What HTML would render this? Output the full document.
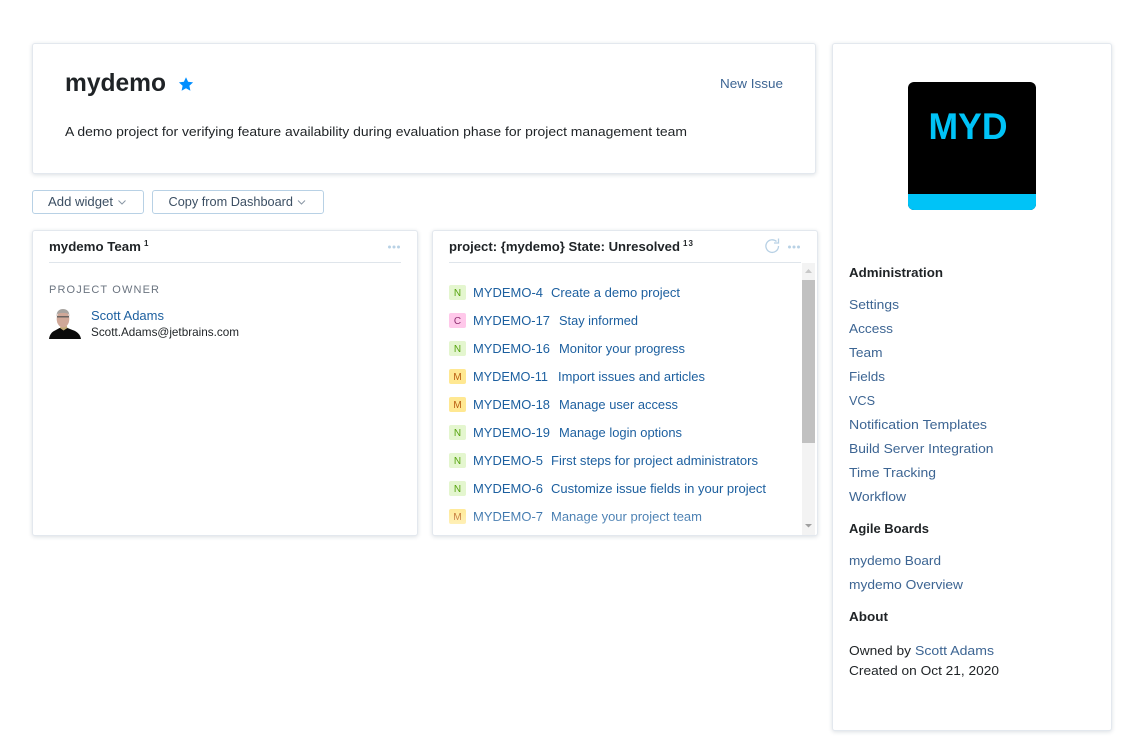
<!DOCTYPE html>
<html lang="en"><head><meta charset="utf-8"><title>mydemo</title>
<style>
html,body{margin:0;padding:0;background:#fff;width:1143px;height:748px;overflow:hidden}
.card{position:absolute;box-sizing:border-box;background:#fff;border:1px solid #e3e8ee;border-radius:3px;box-shadow:0 1px 4px rgba(40,60,90,.16)}
.btn{position:absolute;box-sizing:border-box;height:24px;top:190px;background:#fff;border:1px solid #b8d1e5;border-radius:3px}
.track{position:absolute;left:802px;top:263px;width:13px;height:272px;background:#f3f3f3}
.thumb{position:absolute;left:802px;top:280px;width:13px;height:163px;background:#c1c1c1}
.fade{position:absolute;left:434px;top:505px;width:368px;height:30px;background:linear-gradient(rgba(255,255,255,0),rgba(255,255,255,.55))}
.logo{position:absolute;left:908px;top:82px;width:128px;height:128px;background:#000;border-radius:6px;overflow:hidden}
.logo i{position:absolute;left:0;bottom:0;width:128px;height:16px;background:#00c3f7}
svg{position:absolute;left:0;top:0}
text{font-family:"Liberation Sans",sans-serif;font-size:13px;fill:#1f2326;white-space:pre}
.b{font-weight:700}
.l{fill:#3d6593}
.i{fill:#1c5f9f}
.tag{font-size:10px;text-anchor:middle}
</style></head><body>
<div class="card" style="left:32px;top:43px;width:784px;height:131px"></div>
<div class="card" style="left:832px;top:43px;width:280px;height:688px"></div>
<div class="card" style="left:32px;top:230px;width:386px;height:306px"></div>
<div class="card" style="left:432px;top:230px;width:386px;height:306px"></div>
<div class="btn" style="left:32px;width:112px"></div>
<div class="btn" style="left:152px;width:172px"></div>
<div class="track"></div><div class="thumb"></div>
<div class="logo"><i></i></div>
<svg width="1143" height="748" viewBox="0 0 1143 748">
<!-- header -->
<text class="b" x="65" y="91" style="font-size:25px" lengthAdjust="spacingAndGlyphs" textLength="101">mydemo</text>
<path d="M186 77.200l2.100 4.600 5 .6-3.700 3.400 1 4.900-4.400-2.500-4.400 2.500 1-4.900-3.700-3.400 5-.6z" fill="#008eff"/>
<text class="l" x="720" y="88" lengthAdjust="spacingAndGlyphs" textLength="63">New Issue</text>
<text x="65" y="136" lengthAdjust="spacingAndGlyphs" textLength="622">A demo project for verifying feature availability during evaluation phase for project management team</text>
<!-- buttons -->
<text style="fill:#3c4f63" x="48" y="206" lengthAdjust="spacingAndGlyphs" textLength="65">Add widget</text>
<path d="M118.500 200.500l3.500 3.500 3.500-3.500" fill="none" stroke="#8a97a5"/>
<text style="fill:#3c4f63" x="168.500" y="206" lengthAdjust="spacingAndGlyphs" textLength="124.500">Copy from Dashboard</text>
<path d="M298 200.500l3.500 3.500 3.500-3.500" fill="none" stroke="#8a97a5"/>
<!-- team widget -->
<text class="b" x="49" y="251" lengthAdjust="spacingAndGlyphs" textLength="92">mydemo Team</text>
<text class="b" x="144" y="246" style="font-size:8px" textLength="4">1</text>
<g fill="#b8d1e5"><circle cx="389.500" cy="247" r="1.500"/><circle cx="394" cy="247" r="1.500"/><circle cx="398.500" cy="247" r="1.500"/></g>
<rect x="49" y="262" width="352" height="1" fill="#dfe5eb"/>
<text x="49" y="293" style="font-size:11px;fill:#6b7480" textLength="110">PROJECT OWNER</text>
<!-- avatar -->
<path d="M49 339c.5-4 2.500-7 6-8.500l4.500-2.500h8l5 2c5 1.500 8 5 8.500 9z" fill="#0b0b0b"/>
<path d="M60 328l3.500 2.500 4-2.500-1-3h-5.500z" fill="#c4ac78"/>
<ellipse cx="63" cy="319" rx="6.300" ry="8.500" fill="#d0a898"/>
<path d="M56.700 317c-.6-5.500 2.300-8 6.300-8s6.900 2.500 6.300 8l-.6-3c-3-1.500-8.400-1.500-11.400 0z" fill="#a8a4a0"/>
<rect x="57" y="316" width="12" height="1.500" fill="#6a6360"/>
<text x="91" y="320" class="i" lengthAdjust="spacingAndGlyphs" textLength="73">Scott Adams</text>
<text x="91" y="336" style="font-size:12px" lengthAdjust="spacingAndGlyphs" textLength="148">Scott.Adams@jetbrains.com</text>
<!-- issues widget -->
<text class="b" x="449" y="251" lengthAdjust="spacingAndGlyphs" textLength="231">project: {mydemo} State: Unresolved</text>
<text class="b" x="683" y="246" style="font-size:8px" textLength="10">13</text>
<path d="M776.500 241.500a6.300 6.300 0 1 0 2 4.500" fill="none" stroke="#b8d1e5" stroke-width="1.300"/>
<path d="M778.500 238.500v4.500h-4.500" fill="none" stroke="#b8d1e5" stroke-width="1.300"/>
<g fill="#b8d1e5"><circle cx="789.500" cy="247" r="1.500"/><circle cx="794" cy="247" r="1.500"/><circle cx="798.500" cy="247" r="1.500"/></g>
<rect x="449" y="262" width="352" height="1" fill="#dfe5eb"/>
<path d="M805 273l3.500-4 3.500 4z" fill="#c8c8c8"/>
<path d="M805 524l3.500 3.500 3.500-3.500z" fill="#a0a0a0"/>
<g>
<rect x="449" y="285" width="17" height="15" rx="2" fill="#e4f6cf"/><text class="tag" x="457.500" y="296" style="fill:#55a30c">N</text>
<text class="i" x="473" y="297" lengthAdjust="spacingAndGlyphs" textLength="70">MYDEMO-4</text><text class="i" x="551" y="297" lengthAdjust="spacingAndGlyphs" textLength="129">Create a demo project</text>
<rect x="449" y="313" width="17" height="15" rx="2" fill="#ffc8ea"/><text class="tag" x="457.500" y="324" style="fill:#8f2f72">C</text>
<text class="i" x="473" y="325" lengthAdjust="spacingAndGlyphs" textLength="77">MYDEMO-17</text><text class="i" x="559" y="325" lengthAdjust="spacingAndGlyphs" textLength="79">Stay informed</text>
<rect x="449" y="341" width="17" height="15" rx="2" fill="#e4f6cf"/><text class="tag" x="457.500" y="352" style="fill:#55a30c">N</text>
<text class="i" x="473" y="353" lengthAdjust="spacingAndGlyphs" textLength="77">MYDEMO-16</text><text class="i" x="559" y="353" lengthAdjust="spacingAndGlyphs" textLength="126">Monitor your progress</text>
<rect x="449" y="369" width="17" height="15" rx="2" fill="#ffe892"/><text class="tag" x="457.500" y="380" style="fill:#b85c10">M</text>
<text class="i" x="473" y="381" lengthAdjust="spacingAndGlyphs" textLength="75">MYDEMO-11</text><text class="i" x="558" y="381" lengthAdjust="spacingAndGlyphs" textLength="147">Import issues and articles</text>
<rect x="449" y="397" width="17" height="15" rx="2" fill="#ffe892"/><text class="tag" x="457.500" y="408" style="fill:#b85c10">M</text>
<text class="i" x="473" y="409" lengthAdjust="spacingAndGlyphs" textLength="77">MYDEMO-18</text><text class="i" x="559" y="409" lengthAdjust="spacingAndGlyphs" textLength="119">Manage user access</text>
<rect x="449" y="425" width="17" height="15" rx="2" fill="#e4f6cf"/><text class="tag" x="457.500" y="436" style="fill:#55a30c">N</text>
<text class="i" x="473" y="437" lengthAdjust="spacingAndGlyphs" textLength="77">MYDEMO-19</text><text class="i" x="559" y="437" lengthAdjust="spacingAndGlyphs" textLength="123">Manage login options</text>
<rect x="449" y="453" width="17" height="15" rx="2" fill="#e4f6cf"/><text class="tag" x="457.500" y="464" style="fill:#55a30c">N</text>
<text class="i" x="473" y="465" lengthAdjust="spacingAndGlyphs" textLength="70">MYDEMO-5</text><text class="i" x="551" y="465" lengthAdjust="spacingAndGlyphs" textLength="207">First steps for project administrators</text>
<rect x="449" y="481" width="17" height="15" rx="2" fill="#e4f6cf"/><text class="tag" x="457.500" y="492" style="fill:#55a30c">N</text>
<text class="i" x="473" y="493" lengthAdjust="spacingAndGlyphs" textLength="70">MYDEMO-6</text><text class="i" x="551" y="493" lengthAdjust="spacingAndGlyphs" textLength="215">Customize issue fields in your project</text>
<rect x="449" y="509" width="17" height="15" rx="2" fill="#ffe892"/><text class="tag" x="457.500" y="520" style="fill:#b85c10">M</text>
<text class="i" x="473" y="521" lengthAdjust="spacingAndGlyphs" textLength="70">MYDEMO-7</text><text class="i" x="551" y="521" lengthAdjust="spacingAndGlyphs" textLength="151">Manage your project team</text>
</g>
<!-- logo text -->
<text class="b" x="928.500" y="139" style="font-size:37px;fill:#00c3f7" textLength="79" lengthAdjust="spacingAndGlyphs">MYD</text>
<!-- sidebar -->
<text class="b" x="849" y="277" lengthAdjust="spacingAndGlyphs" textLength="94">Administration</text>
<text class="l" x="849" y="309" lengthAdjust="spacingAndGlyphs" textLength="50">Settings</text>
<text class="l" x="849" y="333" lengthAdjust="spacingAndGlyphs" textLength="44">Access</text>
<text class="l" x="849" y="357" lengthAdjust="spacingAndGlyphs" textLength="33.500">Team</text>
<text class="l" x="849" y="381" lengthAdjust="spacingAndGlyphs" textLength="36">Fields</text>
<text class="l" x="849" y="405" lengthAdjust="spacingAndGlyphs" textLength="26">VCS</text>
<text class="l" x="849" y="429" lengthAdjust="spacingAndGlyphs" textLength="138">Notification Templates</text>
<text class="l" x="849" y="453" lengthAdjust="spacingAndGlyphs" textLength="144.500">Build Server Integration</text>
<text class="l" x="849" y="477" lengthAdjust="spacingAndGlyphs" textLength="87">Time Tracking</text>
<text class="l" x="849" y="501" lengthAdjust="spacingAndGlyphs" textLength="57">Workflow</text>
<text class="b" x="849" y="533" lengthAdjust="spacingAndGlyphs" textLength="80">Agile Boards</text>
<text class="l" x="849" y="565" lengthAdjust="spacingAndGlyphs" textLength="92">mydemo Board</text>
<text class="l" x="849" y="589" lengthAdjust="spacingAndGlyphs" textLength="114">mydemo Overview</text>
<text class="b" x="849" y="621" lengthAdjust="spacingAndGlyphs" textLength="39">About</text>
<text x="849" y="655" lengthAdjust="spacingAndGlyphs" textLength="62">Owned by</text>
<text class="l" x="915" y="655" lengthAdjust="spacingAndGlyphs" textLength="79">Scott Adams</text>
<text x="849" y="675" lengthAdjust="spacingAndGlyphs" textLength="150">Created on Oct 21, 2020</text>
</svg>
<div class="fade"></div>
</body></html>
